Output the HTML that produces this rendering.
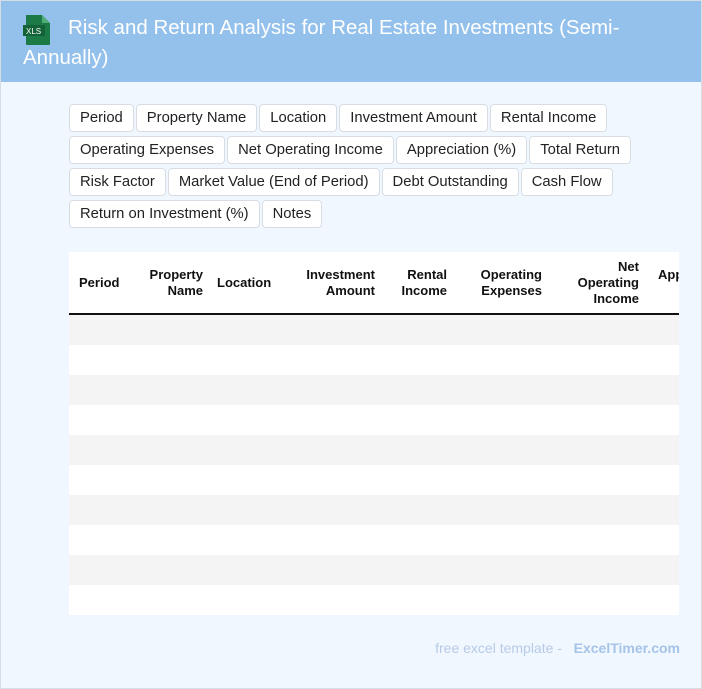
<!DOCTYPE html>
<html><head><style>
body{margin:0;width:702px;height:689px;overflow:hidden;font-family:"Liberation Sans",sans-serif;}
.page{position:absolute;left:0;top:0;width:700px;height:687px;border:1px solid #d6dde6;background:#f0f7ff;}
.hdr{position:absolute;left:0;top:0;width:700px;height:81px;background:#93c1eb;}
.title{position:absolute;left:22px;top:12px;width:660px;color:#fff;font-size:20.5px;line-height:30px;text-indent:45px;}
.chips{position:absolute;left:68px;top:103px;width:580px;display:flex;flex-wrap:wrap;gap:4px 2px;}
.chip{height:26px;line-height:27px;border:1px solid #d8dde3;border-radius:4px;background:#fff;font-size:14.8px;color:#222;padding:0 10px;}
.tbl{position:absolute;left:68px;top:251px;width:610px;height:363px;background:#fff;overflow:hidden;}
.th{position:absolute;font-size:13px;font-weight:bold;color:#111;line-height:16px;}
.row{position:absolute;left:0;width:610px;height:30px;}
.foot{position:absolute;right:21px;top:639px;font-size:14px;color:#b7cbe6;}
</style></head><body><div class="page">
<div class="hdr">
<svg style="position:absolute;left:21px;top:13px" width="30" height="32" viewBox="0 0 30 32"><path d="M4 1h16l8 8v21a1 1 0 0 1-1 1H5a1 1 0 0 1-1-1z" fill="#1b7a45"/><path d="M20 1v8h8z" fill="#4fae76"/><rect x="1" y="11" width="22" height="11" fill="#136238"/><text x="4" y="20" font-size="8" fill="#fff" font-family="Liberation Sans">XLS</text></svg>
<div class="title">Risk and Return Analysis for Real Estate Investments (Semi-Annually)</div>
</div>
<div class="chips">
<div class="chip">Period</div><div class="chip">Property Name</div><div class="chip">Location</div><div class="chip">Investment Amount</div><div class="chip">Rental Income</div>
<div class="chip">Operating Expenses</div><div class="chip">Net Operating Income</div><div class="chip">Appreciation (%)</div><div class="chip">Total Return</div>
<div class="chip">Risk Factor</div><div class="chip">Market Value (End of Period)</div><div class="chip">Debt Outstanding</div><div class="chip">Cash Flow</div>
<div class="chip">Return on Investment (%)</div><div class="chip">Notes</div>
</div>
<div class="tbl">
<div class="th" style="left:10px;top:23px">Period</div>
<div class="th" style="right:476px;top:15px;text-align:right">Property<br>Name</div>
<div class="th" style="left:148px;top:23px">Location</div>
<div class="th" style="right:304px;top:15px;text-align:right">Investment<br>Amount</div>
<div class="th" style="right:232px;top:15px;text-align:right">Rental<br>Income</div>
<div class="th" style="right:137px;top:15px;text-align:right">Operating<br>Expenses</div>
<div class="th" style="right:40px;top:7px;text-align:right">Net<br>Operating<br>Income</div>
<div class="th" style="left:589px;top:15px;white-space:nowrap">Appreciation</div>
<div style="position:absolute;left:0;top:61px;width:610px;height:2px;background:#111"></div>
<div class="row" style="top:63px;background:#f4f4f4"></div>
<div class="row" style="top:123px;background:#f4f4f4"></div>
<div class="row" style="top:183px;background:#f4f4f4"></div>
<div class="row" style="top:243px;background:#f4f4f4"></div>
<div class="row" style="top:303px;background:#f4f4f4"></div>
</div>
<div class="foot">free excel template - &nbsp; <b style="color:#a6c3e8">ExcelTimer.com</b></div>
</div></body></html>
